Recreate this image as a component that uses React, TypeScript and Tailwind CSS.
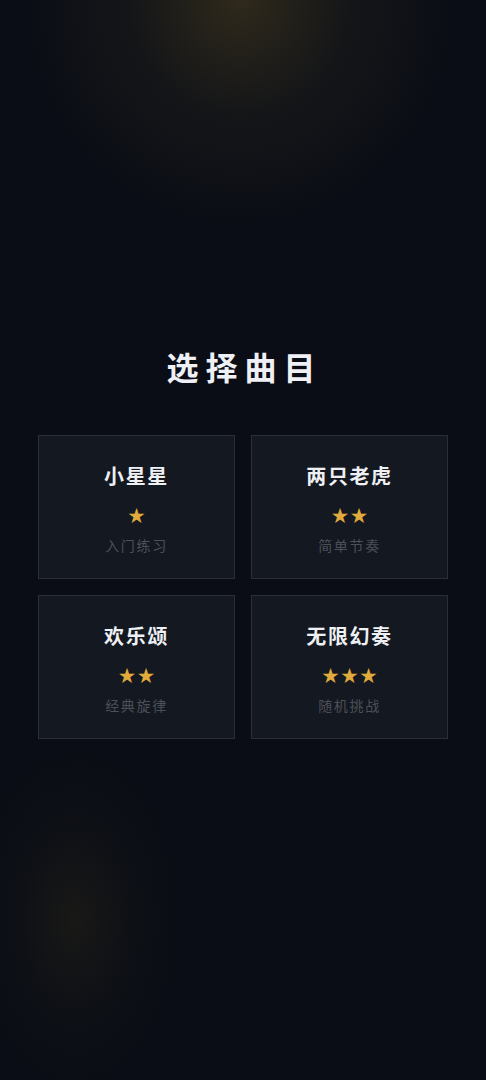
const songs = [
  { title: "小星星", stars: 1, desc: "入门练习" },
  { title: "两只老虎", stars: 2, desc: "简单节奏" },
  { title: "欢乐颂", stars: 2, desc: "经典旋律" },
  { title: "无限幻奏", stars: 3, desc: "随机挑战" },
];

function SongCard({ title, stars, desc }: { title: string; stars: number; desc: string }) {
  return (
    <button className="flex flex-col items-center border border-[#2a2e36] bg-[#141820] pt-[26px] pb-[23px] text-center">
      <div className="text-[20px] leading-[28px] font-bold tracking-[0.08em] text-[#eef0f4]">{title}</div>
      <div className="mt-[13px] flex h-[24px] items-center gap-[2px] text-[17px] leading-[24px] text-[#e0ab3c]">
        {Array.from({ length: stars }).map((_, i) => (
          <span key={i}>★</span>
        ))}
      </div>
      <div className="mt-2 text-[14px] leading-[20px] tracking-[0.12em] text-[#4b5059]">{desc}</div>
    </button>
  );
}

export default function App() {
  return (
    <div
      className="relative flex min-h-screen items-center justify-center overflow-hidden bg-[#0a0d15]"
      style={{ fontFamily: '"Noto Sans CJK SC", "Noto Sans", sans-serif' }}
    >
      {/* glows */}
      <div className="pointer-events-none absolute left-[240px] top-[0px] h-[460px] w-[440px] -translate-x-1/2 -translate-y-1/2 rounded-full bg-[radial-gradient(closest-side,rgba(72,60,32,0.6),rgba(40,38,30,0.35)_50%,rgba(10,13,21,0)_100%)]" />
      <div className="pointer-events-none absolute left-[75px] top-[920px] h-[360px] w-[220px] -translate-x-1/2 -translate-y-1/2 rounded-full bg-[radial-gradient(closest-side,rgba(40,36,24,0.5),rgba(25,26,24,0.25)_50%,rgba(10,13,21,0)_100%)]" />

      <div className="relative w-full px-[38px]">
        <h1 className="mb-[45px] pl-[0.1em] text-center text-[32px] leading-[48px] font-bold tracking-[0.22em] text-[#eef0f5]">
          选择曲目
        </h1>
        <div className="grid grid-cols-2 gap-4">
          {songs.map((s) => (
            <SongCard key={s.title} {...s} />
          ))}
        </div>
      </div>
    </div>
  );
}
